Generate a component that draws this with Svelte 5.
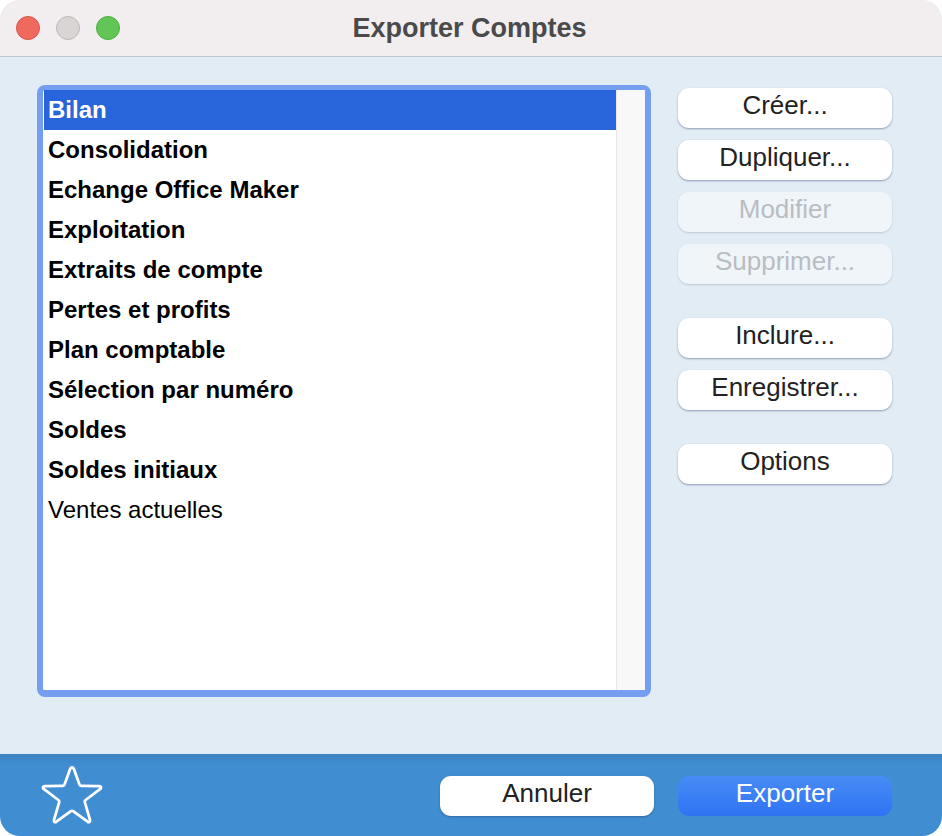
<script>
	const accounts = [
		{ name: 'Bilan', bold: true },
		{ name: 'Consolidation', bold: true },
		{ name: 'Echange Office Maker', bold: true },
		{ name: 'Exploitation', bold: true },
		{ name: 'Extraits de compte', bold: true },
		{ name: 'Pertes et profits', bold: true },
		{ name: 'Plan comptable', bold: true },
		{ name: 'Sélection par numéro', bold: true },
		{ name: 'Soldes', bold: true },
		{ name: 'Soldes initiaux', bold: true },
		{ name: 'Ventes actuelles', bold: false }
	];

	const groups = [
		[
			{ label: 'Créer...' },
			{ label: 'Dupliquer...' },
			{ label: 'Modifier', disabled: true },
			{ label: 'Supprimer...', disabled: true }
		],
		[{ label: 'Inclure...' }, { label: 'Enregistrer...' }],
		[{ label: 'Options' }]
	];

	let selected = $state(0);
</script>

<div class="window">
	<header class="titlebar">
		<div class="lights">
			<span class="light red"></span>
			<span class="light grey"></span>
			<span class="light green"></span>
		</div>
		<h1>Exporter Comptes</h1>
	</header>

	<main class="content">
		<div class="listbox">
			<ul>
				{#each accounts as account, i}
					<li class:bold={account.bold} class:selected={i === selected}>
						<button class="row" onclick={() => (selected = i)}>{account.name}</button>
					</li>
				{/each}
			</ul>
			<div class="scrolltrack"></div>
		</div>

		<div class="actions">
			{#each groups as group}
				<div class="group">
					{#each group as item}
						<button class="btn" disabled={item.disabled}>{item.label}</button>
					{/each}
				</div>
			{/each}
		</div>
	</main>

	<footer class="footer">
		<svg class="star" width="62" height="60" viewBox="0 0 62 60" fill="none" aria-hidden="true">
			<path
				d="M31 2.4 Q32.2 2.4 32.8 3.8 L38.4 19.4 Q38.9 20.8 40.4 20.8 L58 21.2 Q60 21.4 60 22.8 Q59.8 23.6 59 24.2 L44.6 35 Q43.4 35.9 43.8 37.2 L49 54.8 Q49.4 56.4 48.4 56.9 Q47.6 57.3 46.6 56.7 L32.4 46.4 Q31 45.4 29.6 46.4 L15.4 56.7 Q14.4 57.3 13.6 56.9 Q12.6 56.4 13 54.8 L18.2 37.2 Q18.6 35.9 17.4 35 L3 24.2 Q2.2 23.6 2 22.8 Q2 21.4 4 21.2 L21.6 20.8 Q23.1 20.8 23.6 19.4 L29.2 3.8 Q29.8 2.4 31 2.4 Z"
				stroke="#fff"
				stroke-width="2.8"
				stroke-linejoin="round"
			/>
		</svg>
		<div class="footer-buttons">
			<button class="btn">Annuler</button>
			<button class="btn primary">Exporter</button>
		</div>
	</footer>
</div>

<style>
	:global(body) {
		margin: 0;
		background: #fff;
	}
	.window {
		width: 942px;
		height: 836px;
		display: flex;
		flex-direction: column;
		border-radius: 20px;
		overflow: hidden;
		background: #e2ecf5;
		font-family: 'Liberation Sans', Arial, sans-serif;
		font-size: 24px;
		color: #222;
	}
	.titlebar {
		position: relative;
		flex: none;
		height: 57px;
		box-sizing: border-box;
		display: flex;
		align-items: center;
		justify-content: center;
		padding-right: 3px;
		background: #f2eeef;
		border-bottom: 1px solid #bfc8d2;
	}
	h1 {
		margin: 0;
		font-size: 27px;
		font-weight: 700;
		color: #4a4a4a;
	}
	.lights {
		position: absolute;
		left: 16px;
		top: 16px;
		display: flex;
		gap: 16px;
	}
	.light {
		width: 24px;
		height: 24px;
		box-sizing: border-box;
		border-radius: 50%;
		border: 1px solid;
	}
	.red {
		background: #f0695f;
		border-color: #d9534a;
	}
	.grey {
		background: #d9d5d5;
		border-color: #bdb8b8;
	}
	.green {
		background: #61c655;
		border-color: #4cae43;
	}
	.content {
		flex: 1;
		display: flex;
		align-items: flex-start;
		gap: 27px;
		padding: 28px 50px 0 37px;
	}
	.listbox {
		flex: none;
		width: 614px;
		height: 612px;
		box-sizing: border-box;
		display: flex;
		border: 6px solid #759ef0;
		border-top-width: 5px;
		border-bottom-width: 7px;
		border-radius: 8px;
		background: #fff;
	}
	ul {
		flex: 1;
		margin: 0;
		padding: 0 0 0 1px;
		list-style: none;
	}
	li {
		height: 40px;
	}
	.row {
		display: block;
		width: 100%;
		height: 100%;
		padding: 0 0 0 4px;
		border: 0;
		background: none;
		font: inherit;
		color: #000;
		text-align: left;
	}
	.bold .row {
		font-weight: 700;
	}
	.selected {
		background: #2965da;
	}
	.selected .row {
		color: #fff;
	}
	.scrolltrack {
		flex: none;
		width: 29px;
		box-sizing: border-box;
		background: #f8f8f8;
		border-left: 1px solid #e6e6e6;
	}
	.actions {
		flex: none;
		width: 214px;
		margin-top: 3px;
		display: flex;
		flex-direction: column;
		gap: 34px;
	}
	.group {
		display: flex;
		flex-direction: column;
		gap: 12px;
	}
	.btn {
		width: 214px;
		height: 40px;
		padding: 0 0 5px;
		border: 0;
		border-radius: 11px;
		background: #fff;
		box-shadow: 0 1px 2px rgba(40, 60, 90, 0.45);
		font: inherit;
		font-size: 26px;
		color: #222;
	}
	.btn:disabled {
		background: #f0f5fa;
		color: #b9bdc2;
		box-shadow: 0 1px 2px rgba(40, 60, 90, 0.2);
	}
	.footer {
		flex: none;
		height: 82px;
		box-sizing: border-box;
		display: flex;
		justify-content: space-between;
		padding: 22px 50px 0 41px;
		background: linear-gradient(#3b83c1, #408dd2 12px);
	}
	.star {
		margin-top: -11px;
	}
	.footer-buttons {
		display: flex;
		gap: 24px;
	}
	.primary {
		background: linear-gradient(#488cf6, #2f73f4);
		color: #fff;
		box-shadow: none;
	}
</style>
